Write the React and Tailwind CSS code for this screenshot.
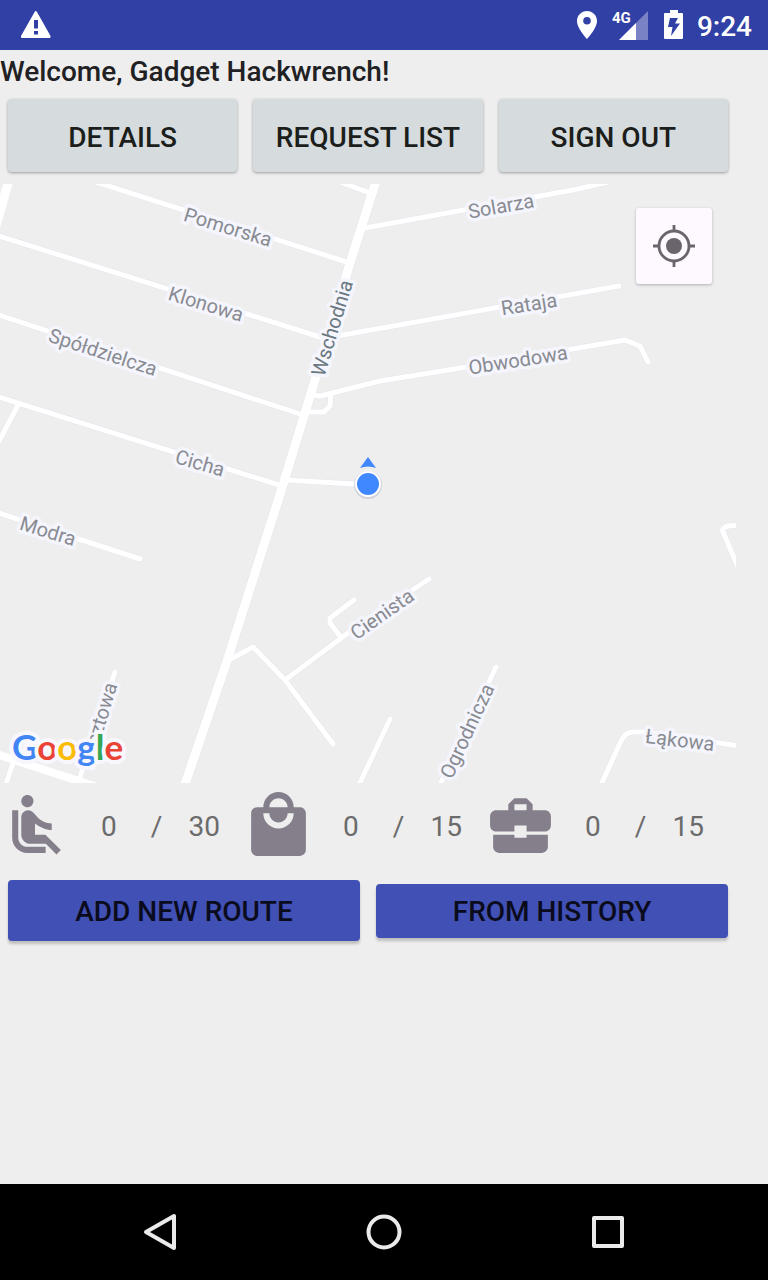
import React from "react";
import { MdAirlineSeatReclineNormal, MdBusinessCenter, MdLocalMall } from "react-icons/md";

const minorRoads = [
  "M340 182L370 193",
  "M96 182L350 263",
  "M-4 235L320 337L337 336L619 286",
  "M365 228L573 190L608 182",
  "M-4 314L300 414",
  "M-4 396L279 485",
  "M18 405L-4 447",
  "M313 395L320 396L380 381L467 367L625 340L640 346L648 362",
  "M331 393L330 406L324 412L305 412",
  "M285 480L355 484",
  "M-4 512L140 559",
  "M227 661L253 647L285 680L333 744",
  "M285 680L348 633L429 579",
  "M340 636L330 623V618L354 600",
  "M390 719L358 787",
  "M496 667L439 787",
  "M600 787L621 741Q625 733 632 732L644 732L740 746",
  "M740 525L728 526Q721 528 723 532L738 567",
  "M13 763L5 787",
  "M115 672L80 777",
];

const labels = [
  ["Pomorska", 228, 227, 17],
  ["Klonowa", 206, 304, 17],
  ["Spółdzielcza", 103, 352, 18],
  ["Cicha", 200, 463, 16],
  ["Modra", 48, 531, 17],
  ["Solarza", 501, 206, -10],
  ["Rataja", 529, 304, -9],
  ["Obwodowa", 518, 360, -9],
  ["Cienista", 382, 614, -35],
  ["Ogrodnicza", 467, 731, -65],
  ["Łąkowa", 680, 740, 7],
  ["Pocztowa", 98, 725, -73],
];

function StreetLabel({ name, x, y, angle, color = "#898b92" }) {
  return (
    <text
      transform={`translate(${x} ${y}) rotate(${angle})`}
      y="7"
      textAnchor="middle"
      fontSize="20"
      fill={color}
      stroke="#f5f5fd"
      strokeWidth="7"
      strokeLinejoin="round"
      paintOrder="stroke"
    >
      {name}
    </text>
  );
}

function StreetMap() {
  return (
    <svg viewBox="0 184 736 599" className="block h-auto w-full" role="img" aria-label="Map">
      <g fill="none" strokeLinecap="round" strokeLinejoin="round">
        <g stroke="#e5e5f0" strokeWidth="6">
          {minorRoads.map((d) => <path key={d} d={d} />)}
          <path strokeWidth="10" d="M377 178L350 263L315 380L282 488L227 661L183 790" />
        </g>
        <g stroke="#fff" strokeWidth="5">
          {minorRoads.map((d) => <path key={d} d={d} />)}
          <path strokeWidth="9" d="M377 178L350 263L315 380L282 488L227 661L183 790" />
          <path strokeWidth="9" d="M9 180L-4 226" />
          <path strokeWidth="8" d="M-4 754L100 788" />
        </g>
      </g>
      {labels.map(([name, x, y, angle]) => (
        <StreetLabel key={name} name={name} x={x} y={y} angle={angle} />
      ))}
      <StreetLabel name="Wschodnia" x={332} y={328} angle={-73} color="#6a7880" />
      <path d="M368 457L376 468Q368 465 360 468Z" fill="#4088ff" />
      <circle cx="368" cy="485" r="14" fill="#d2d2da" />
      <circle cx="368" cy="484" r="13" fill="#fff" />
      <circle cx="368" cy="484" r="11" fill="#4088ff" />
      <text x="12" y="760" fontFamily="Lato, sans-serif" fontWeight="700" fontSize="35" stroke="#f9f7fe" strokeWidth="8" strokeLinejoin="round" paintOrder="stroke">
        <tspan fill="#4285f4">G</tspan><tspan fill="#ea4335">o</tspan><tspan fill="#fbbc05">o</tspan><tspan fill="#4285f4">g</tspan><tspan fill="#34a853">l</tspan><tspan fill="#ea4335">e</tspan>
      </text>
    </svg>
  );
}

function StatusBar() {
  return (
    <header className="flex h-[50px] items-center justify-between bg-[#3140a5] pl-5 pr-4 text-white">
      <svg width="32" height="32" viewBox="0 0 32 32" aria-label="Warning">
        <path fill="currentColor" fillRule="evenodd" d="M15.8 2Q16.500 2 17 3L30.500 27Q31 29 29.500 29H2Q0.500 29 1 27L14.600 3Q15 2 15.800 2ZM14 11V19.500H18V11ZM14 22V25.500H18V22Z" />
      </svg>
      <div className="flex items-center">
        <svg width="20" height="30" viewBox="0 0 20 30" aria-label="Location on">
          <path fill="currentColor" fillRule="evenodd" d="M10 1C4.500 1 0 5.400 0 11C0 18.500 10 29 10 29S20 18.500 20 11C20 5.400 15.500 1 10 1ZM10 7A3.800 3.800 0 1 1 10 14.600A3.800 3.800 0 1 1 10 7Z" />
        </svg>
        <svg className="ml-[14px]" width="38" height="30" viewBox="0 0 38 30" aria-label="4G signal">
          <path d="M37 1V30H8Z" fill="#fff" opacity=".35" />
          <path d="M25 13V30H8Z" fill="#fff" />
          <text x="1" y="13" fontSize="15" fontWeight="700" fill="#fff">4G</text>
        </svg>
        <svg className="ml-[15px]" width="20" height="30" viewBox="0 0 20 30" aria-label="Battery charging">
          <path fill="currentColor" fillRule="evenodd" d="M6 0H14V3H18Q19 3 19 4V28Q19 29 18 29H1Q0 29 0 28V4Q0 3 1 3H6ZM6 8L4 17H8.500L7 26L16 13.500H11L14 8Z" />
        </svg>
        <time className="ml-[13px] pt-[3px] text-[28px] font-medium leading-8">9:24</time>
      </div>
    </header>
  );
}

function TopButton({ children }) {
  return (
    <button type="button" className="h-[73px] flex-1 whitespace-nowrap rounded-[4px] bg-[#d6dbde] pt-1 text-[28px] font-medium leading-8 text-[#1b1e1b] shadow-[0_1px_3px_rgba(40,30,50,0.4)]">
      {children}
    </button>
  );
}

function Capacity({ icon: Icon, label, used, total }) {
  return (
    <div className="flex items-center" aria-label={label}>
      <Icon className="size-[73px] shrink-0 text-[#857f8c]" aria-hidden="true" />
      <div className="grid flex-1 grid-cols-3 pl-3 pr-[14px] pt-[3px] text-center">
        <span>{used}</span>
        <span>/</span>
        <span>{total}</span>
      </div>
    </div>
  );
}

export default function App() {
  return (
    <div className="flex min-h-screen flex-col bg-[#eeeeee] font-[Roboto,sans-serif]">
      <StatusBar />
      <main className="flex-1 pr-8">
        <h1 className="pt-[2px] text-[28px] font-medium leading-10 text-[#212123]">Welcome, Gadget Hackwrench!</h1>
        <div className="mt-[7px] flex gap-4 px-2">
          <TopButton>DETAILS</TopButton>
          <TopButton>REQUEST LIST</TopButton>
          <TopButton>SIGN OUT</TopButton>
        </div>
        <section className="relative mt-3">
          <StreetMap />
          <button type="button" aria-label="My location" className="absolute right-6 top-6 flex size-[76px] items-center justify-center rounded-[3px] bg-[#fdf9ff] text-[#6a646c] shadow-[0_1px_3px_rgba(40,30,50,0.3)]">
            <svg width="42" height="42" viewBox="0 0 42 42" fill="none" stroke="currentColor" strokeWidth="2.800">
              <circle cx="21" cy="21" r="15" />
              <circle cx="21" cy="21" r="8" fill="currentColor" stroke="none" />
              <path d="M21 0V6M21 36V42M0 21H6M36 21H42" />
            </svg>
          </button>
        </section>
        <section className="mt-[6px] grid grid-cols-3 pr-[10px] text-[28px] leading-8 text-[#6b6b6b]">
          <Capacity icon={MdAirlineSeatReclineNormal} label="Seats" used={0} total={30} />
          <Capacity icon={MdLocalMall} label="Bags" used={0} total={15} />
          <Capacity icon={MdBusinessCenter} label="Luggage" used={0} total={15} />
        </section>
        <div className="mt-[18px] flex items-center gap-4 px-2 text-[28px] font-medium leading-8 text-[#0a0b1c]">
          <button type="button" className="h-[61px] flex-1 rounded-[4px] bg-[#4150b5] pt-[2px] shadow-[0_3px_3px_rgba(0,0,0,0.2)]">ADD NEW ROUTE</button>
          <button type="button" className="h-[54px] flex-1 rounded-[4px] bg-[#4150b5] pt-[2px] shadow-[0_3px_3px_rgba(0,0,0,0.2)]">FROM HISTORY</button>
        </div>
      </main>
      <nav className="flex h-24 items-center justify-center gap-[176px] bg-black text-[#ebebeb]">
        <button type="button" aria-label="Back">
          <svg width="48" height="48" viewBox="0 0 48 48" fill="none" stroke="currentColor" strokeWidth="4" strokeLinejoin="round"><path d="M38 8V40L10 24Z" /></svg>
        </button>
        <button type="button" aria-label="Home">
          <svg width="48" height="48" viewBox="0 0 48 48" fill="none" stroke="currentColor" strokeWidth="4"><circle cx="24" cy="24" r="15.500" /></svg>
        </button>
        <button type="button" aria-label="Overview">
          <svg width="48" height="48" viewBox="0 0 48 48" fill="none" stroke="currentColor" strokeWidth="4" strokeLinejoin="round"><path d="M10 10H38V38H10Z" /></svg>
        </button>
      </nav>
    </div>
  );
}
